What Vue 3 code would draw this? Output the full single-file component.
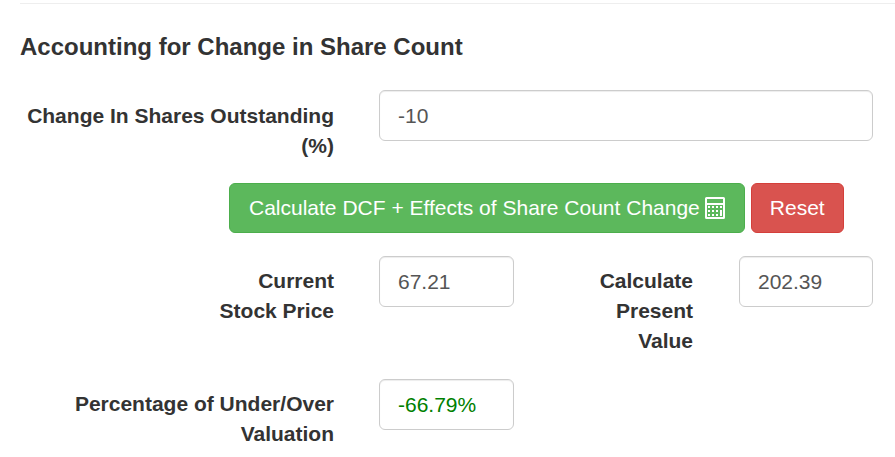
<template>
  <div class="page">
    <hr class="rule" />
    <h4 class="title">Accounting for Change in Share Count</h4>

    <!-- 주식 수 변화 -->
    <div class="row-wide">
      <label class="label label-first">Change In Shares Outstanding (%)</label>
      <input class="field" type="text" value="-10" />
    </div>

    <div class="actions">
      <button class="btn btn-green" type="button">
        Calculate DCF + Effects of Share Count Change
        <svg class="calc" width="20" height="22" viewBox="0 0 20 22">
          <path
            fill="#fff"
            fill-rule="evenodd"
            d="M1.5 0h17A1.5 1.5 0 0 1 20 1.5v19a1.5 1.5 0 0 1-1.5 1.5h-17A1.5 1.5 0 0 1 0 20.5v-19A1.5 1.5 0 0 1 1.5 0zM2 2v4h16V2zM2 8v12h16V8z"
          />
          <rect v-for="c in calcCells" :key="c.id" fill="#fff" :x="c.x" :y="c.y" width="2" :height="c.h" />
        </svg>
      </button>
      <button class="btn btn-red" type="button">Reset</button>
    </div>

    <div class="row-pair">
      <label class="label label-tight">Current Stock Price</label>
      <input class="field" type="text" value="67.21" />
      <label class="label label-end">Calculate Present Value</label>
      <input class="field" type="text" value="202.39" />
    </div>

    <div class="row-single">
      <label class="label">Percentage of Under/Over Valuation</label>
      <input class="field field-green" type="text" value="-66.79%" />
    </div>
  </div>
</template>

<script setup>
// 계산기 아이콘 버튼 격자
const calcCells = [];
[3, 7, 11, 15].forEach((x, col) => {
  [9, 13, 17].forEach((y, row) => {
    // 마지막 열은 아래 두 칸이 이어진 긴 버튼
    if (col === 3 && row === 2) return;
    calcCells.push({
      id: `${col}-${row}`,
      x,
      y,
      h: col === 3 && row === 1 ? 6 : 2,
    });
  });
});
</script>

<style>
html,
body {
  margin: 0;
  background: #fff;
}
</style>

<style scoped>
.page {
  box-sizing: border-box;
  width: 895px;
  height: 457px;
  overflow: hidden;
  padding: 3px 22px 0 20px;
  font-family: "Liberation Sans", Arial, sans-serif;
  font-size: 21px;
  line-height: 30px;
  color: #333;
}

.rule {
  margin: 0 -22px 0 0;
  border: 0;
  border-top: 1px solid #eee;
}

.title {
  margin: 28px 0 28px;
  font-size: 24px;
  line-height: 30px;
  font-weight: 700;
}

.row-wide,
.row-pair,
.row-single {
  display: grid;
  column-gap: 45px;
  align-items: start;
}

.row-wide {
  grid-template-columns: 314px 494px;
}

.row-pair {
  grid-template-columns: 314px 135px 135px 134px;
  margin-top: 23px;
}

.row-single {
  grid-template-columns: 314px 135px;
  margin-top: 23px;
}

.label {
  padding-top: 10px;
  text-align: right;
  font-weight: 700;
}

.label-first {
  padding-top: 11px;
  margin-bottom: -1px;
}

.label-tight {
  padding-left: 180px;
}

.label-end {
  padding-right: 1px;
}

.field {
  box-sizing: border-box;
  width: 100%;
  height: 51px;
  padding: 9px 18px;
  border: 1px solid #ccc;
  border-radius: 6px;
  box-shadow: inset 0 1px 1px rgba(0, 0, 0, 0.075);
  font: inherit;
  color: #555;
  background: #fff;
  outline: none;
}

.field-green {
  color: green;
}

.actions {
  display: flex;
  gap: 6px;
  margin-top: 23px;
  margin-left: 209px;
}

.btn {
  box-sizing: border-box;
  height: 50px;
  padding: 0 18px;
  border: 1px solid;
  border-radius: 6px;
  font: inherit;
  color: #fff;
  white-space: nowrap;
  display: flex;
  align-items: center;
  gap: 5px;
}

.btn-green {
  background: #5cb85c;
  border-color: #4cae4c;
  padding-left: 19px;
  padding-right: 19px;
}

.btn-red {
  background: #d9534f;
  border-color: #d43f3a;
}

.calc {
  flex: none;
}
</style>
